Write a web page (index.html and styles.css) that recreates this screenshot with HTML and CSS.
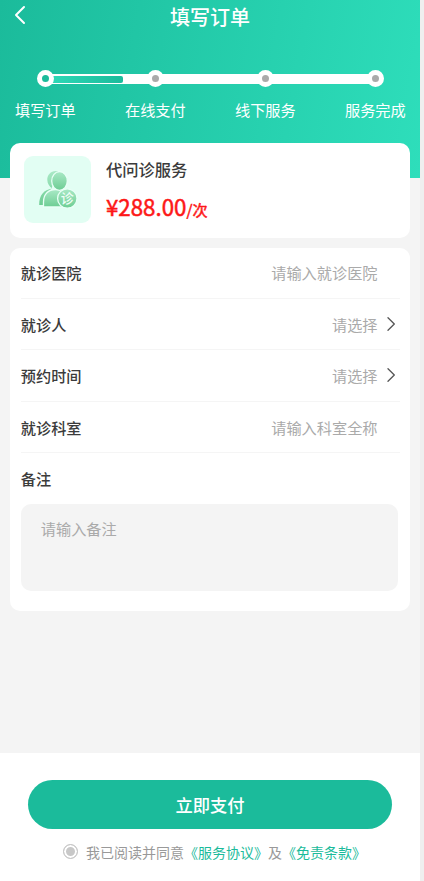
FILE: index.html
```html
<!DOCTYPE html>
<html lang="zh-CN">
<head>
<meta charset="utf-8">
<title>填写订单</title>
<link rel="stylesheet" href="styles.css">
</head>
<body>
<div class="app">
  <header class="hero">
    <div class="navbar">
      <svg class="back" width="12" height="20" viewBox="0 0 12 20"><path d="M10 2 2 10l8 8"/></svg>
      <h1>填写订单</h1>
    </div>
    <ol class="steps">
      <li class="step active"><span class="dot"></span><span class="label">填写订单</span></li>
      <li class="step"><span class="dot"></span><span class="label">在线支付</span></li>
      <li class="step"><span class="dot"></span><span class="label">线下服务</span></li>
      <li class="step"><span class="dot"></span><span class="label">服务完成</span></li>
    </ol>
  </header>
  <main>
    <section class="card service">
      <svg class="service-icon" width="67" height="67" viewBox="0 0 67 67">
        <defs><linearGradient id="g" x1="0" y1="0" x2="0" y2="1"><stop offset="0" stop-color="#a9e9c6"/><stop offset="1" stop-color="#6dcd93"/></linearGradient></defs>
        <rect width="67" height="67" rx="9" fill="#e2fef3"/>
        <path d="M34 15.300c-6-1.500-11 3-10.700 8.700.2 4 2 6 4.700 8.500-8 1.500-12.800 6-12.800 16.500h6z" fill="url(#g)"/>
        <g fill="url(#g)" stroke="#e9fff6" stroke-width="1.300">
          <path d="M19.500 51V46c0-8 5-12.500 12-12.500h6c7 0 12 4.500 12 12.500v5z"/>
          <ellipse cx="35.500" cy="25" rx="7.800" ry="9.300"/>
          <circle cx="43.300" cy="42.500" r="9.700"/>
        </g>
        <text x="43.300" y="47.200" text-anchor="middle">诊</text>
      </svg>
      <div class="service-info">
        <h2>代问诊服务</h2>
        <p class="price">¥288.00<small>/次</small></p>
      </div>
    </section>
    <section class="card form">
      <div class="row"><b>就诊医院</b><span class="hint">请输入就诊医院</span></div>
      <div class="row"><b>就诊人</b><span class="hint">请选择</span><svg class="arrow" width="9" height="14" viewBox="0 0 9 14"><path d="m1 .8 6.300 6.200L1 13.200"/></svg></div>
      <div class="row"><b>预约时间</b><span class="hint">请选择</span><svg class="arrow" width="9" height="14" viewBox="0 0 9 14"><path d="m1 .8 6.300 6.200L1 13.200"/></svg></div>
      <div class="row"><b>就诊科室</b><span class="hint">请输入科室全称</span></div>
      <div class="row last"><b>备注</b></div>
      <div class="note">请输入备注</div>
    </section>
  </main>
  <footer>
    <button class="pay">立即支付</button>
    <div class="agree"><span class="radio"></span><span>我已阅读并同意<a>《服务协议》</a>及<a>《免责条款》</a></span></div>
  </footer>
</div>
</body>
</html>
```
FILE: styles.css
```css
* { box-sizing: border-box; margin: 0; padding: 0; }
body { background: #efefef; font-family: "Noto Sans CJK SC", sans-serif; font-size: 15.2px; color: #3b3b3b; }
.app { width: 420px; height: 881px; background: #f4f4f4; display: flex; flex-direction: column; }
.hero { height: 178px; flex: none; background: linear-gradient(100deg, #1bbb9b 0%, #2edebb 100%); color: #fff; }
.navbar { height: 33px; display: grid; grid-template-columns: 40px 1fr 40px; align-items: center; }
.back { margin: -3px 0 0 14px; fill: none; stroke: #fff; stroke-width: 2; stroke-linecap: round; stroke-linejoin: round; }
h1 { font-size: 20px; line-height: 33px; font-weight: 500; text-align: center; }
.steps { list-style: none; display: grid; grid-template-columns: repeat(4, 110px); margin: 37px 0 0 -9.7px; }
.step { display: flex; flex-direction: column; align-items: center; position: relative; }
.step:not(:last-child)::before { content: ""; position: absolute; left: 55px; top: 4.300px; width: 110px; height: 9.500px; background: #fff; }
.step.active::after { content: ""; position: absolute; left: 62px; top: 6px; width: 70.500px; height: 6.800px; border-radius: 0 2px 2px 0; background: linear-gradient(90deg, #2dd8b6, #1bbb9b); }
.dot { width: 17px; height: 17px; border-radius: 50%; border: 5px solid #fff; background: #aaa; z-index: 1; }
.active .dot { background: #1bbb9b; }
.label { margin-top: 10.500px; line-height: 22px; }
main { margin: -35.500px 10px 0 10.300px; flex: 1; }
.card { background: #fff; border-radius: 10px; }
.service { height: 95px; display: flex; padding: 13.500px 0 0 14px; }
.service-icon { flex: none; }
.service-icon text { font-size: 13px; font-weight: 500; fill: #f0fff8; }
.service-info { margin-left: 14.700px; }
h2 { font-size: 16.300px; line-height: 24px; margin-top: 1px; font-weight: 500; }
.price { color: #fd1717; font-size: 22.300px; line-height: 32px; margin-top: 9px; font-weight: 400; -webkit-text-stroke: .5px #fd1717; }
.price small { font-size: 15.200px; }
.form { margin-top: 10.500px; height: 363px; padding: 0 10.500px; }
.row { height: 51.500px; display: flex; align-items: center; border-bottom: 1px solid #f5f5f5; position: relative; }
.row:first-child { height: 50.500px; }
.row.last { border: 0; padding-bottom: 1px; }
.row b { font-weight: 500; flex: 1; }
.hint { color: #aaa; margin-right: 22px; }
.arrow { margin: 0 4px 0 -13px; fill: none; stroke: #555; stroke-width: 1.300; stroke-linecap: round; stroke-linejoin: round; }
.row:first-child b, .row:first-child .hint { margin-top: -1px; }
.note { width: 377px; height: 87.500px; margin-top: -1px; padding: 13px 20px; line-height: 23px; border-radius: 10px; background: #f4f4f4; color: #aaa; }
footer { height: 128px; background: #fff; padding: 27px 28px 0; }
.pay { display: block; width: 364px; height: 49px; border: 0; border-radius: 25px; background: #1bbb9b; color: #fff; font: 500 17.300px/50px "Noto Sans CJK SC", sans-serif; }
.agree { display: flex; align-items: center; margin: 13px 0 0 34.500px; font-size: 14px; line-height: 21px; color: #999; white-space: nowrap; }
.radio { width: 15px; height: 15px; border-radius: 50%; border: 1px solid #c4c4c4; background: #c8c8c8; box-shadow: inset 0 0 0 2px #fff; margin: -2px 8.500px 0 0; }
.agree a { color: #1bbb9b; }
```
